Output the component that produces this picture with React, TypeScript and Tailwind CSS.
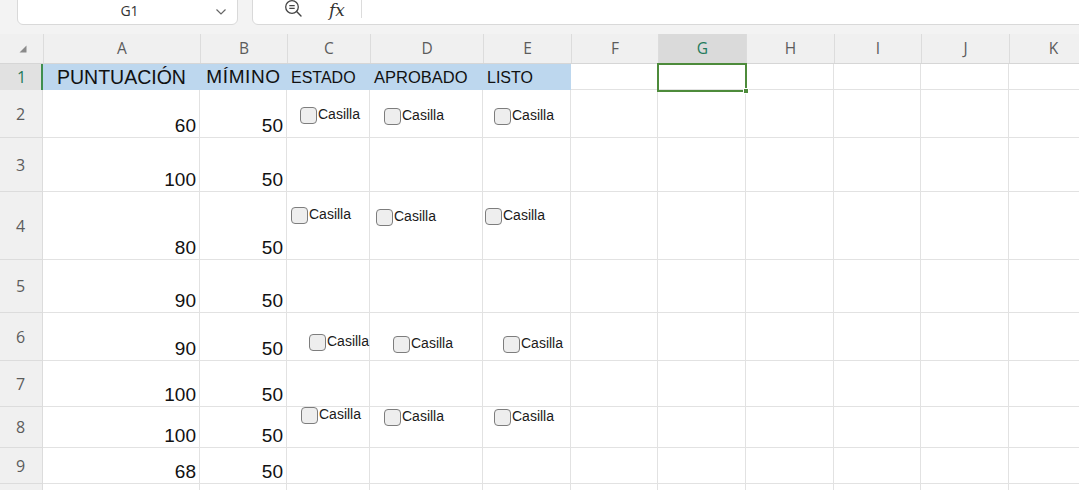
import React from "react";

const colW = [
  "w-[157px]",
  "w-[87px]",
  "w-[83px]",
  "w-[113px]",
  "w-[88px]",
  "w-[87px]",
  "w-[88px]",
  "w-[88px]",
  "w-[87px]",
  "w-[88px]",
  "w-[88px]",
];
const letters = ["A", "B", "C", "D", "E", "F", "G", "H", "I", "J", "K"];

const rowH = [
  "h-[48px]",
  "h-[54px]",
  "h-[68px]",
  "h-[53px]",
  "h-[48px]",
  "h-[46px]",
  "h-[41px]",
  "h-[36px]",
  "h-[20px]",
];
const data: [string, string][] = [
  ["60", "50"],
  ["100", "50"],
  ["80", "50"],
  ["90", "50"],
  ["90", "50"],
  ["100", "50"],
  ["100", "50"],
  ["68", "50"],
  ["", ""],
];

const boxes: { x: number; y: number }[] = [
  { x: 300, y: 107 },
  { x: 384, y: 108 },
  { x: 494, y: 108 },
  { x: 291, y: 207 },
  { x: 376, y: 209 },
  { x: 485, y: 208 },
  { x: 309, y: 334 },
  { x: 393, y: 336 },
  { x: 503, y: 336 },
  { x: 301, y: 407 },
  { x: 384, y: 409 },
  { x: 494, y: 409 },
];

function Casilla({ x, y }: { x: number; y: number }) {
  return (
    <div className="absolute flex items-start" style={{ left: x, top: y }}>
      <div className="w-[17px] h-[17px] rounded-[4px] border border-[#7d7d7d] bg-[#eeeeee]" />
      <span className="text-[14px] leading-[15px] text-[#1a1a1a] ml-[1px]">
        Casilla
      </span>
    </div>
  );
}

export default function App() {
  return (
    <div className="relative w-[1079px] h-[490px] overflow-hidden bg-white font-['Liberation_Sans',Arial,sans-serif]">
      {/* toolbar */}
      <div className="h-[34px] bg-[#f3f3f3] flex items-start">
        <div className="ml-[17px] -mt-[6px] w-[221px] shrink-0 h-[31px] bg-white border border-[#d9d9d9] rounded-[6px] flex items-end pb-[5px] relative">
          <span className="flex-1 text-center text-[14px] leading-[16px] text-[#333] font-['Open_Sans',sans-serif] pl-[4px]">
            G1
          </span>
          <svg className="absolute right-[10px] bottom-[8px]" width="12" height="8" viewBox="0 0 12 8">
            <path d="M1.5 1.5 L6 6 L10.5 1.5" fill="none" stroke="#666" strokeWidth="1.2" />
          </svg>
        </div>
        <div className="ml-[14px] -mt-[6px] flex-1 -mr-[10px] h-[31px] bg-white border border-[#d9d9d9] rounded-[6px] flex items-end pb-[3px]">
          <svg className="ml-[31px] mb-[3px]" width="19" height="19" viewBox="0 0 19 19">
            <circle cx="8" cy="8" r="6.3" fill="none" stroke="#444" strokeWidth="1.3" />
            <path d="M5.3 6.7 H10.7 M5.3 9.3 H10.7" stroke="#444" strokeWidth="1.2" />
            <path d="M12.6 12.6 L17 17" stroke="#444" strokeWidth="1.4" strokeLinecap="round" />
          </svg>
          <span className="ml-[26px] mb-[1px] italic text-[17px] leading-[20px] text-[#333] font-['DejaVu_Serif',serif]">
            fx
          </span>
          <div className="ml-[16px] w-px h-[22px] bg-[#dcdcdc] mb-[3px]" />
        </div>
      </div>

      {/* column header */}
      <div className="flex h-[30px] bg-[#f0f0f0] border-b border-[#d6d6d6]">
        <div className="w-[43px] shrink-0 relative">
          <svg className="absolute left-[19px] top-[11px]" width="8" height="8" viewBox="0 0 8 8">
            <path d="M7.5 0.5 V7.5 H0.5 Z" fill="#8a8a8a" />
          </svg>
        </div>
        {letters.map((l, i) => (
          <div
            key={l}
            className={`${colW[i]} shrink-0 border-l border-[#dcdcdc] flex items-center justify-center pt-[1px] text-[15.5px] font-['Open_Sans',sans-serif] ${
              l === "G" ? "bg-[#dadada] text-[#1f7a5c]" : "text-[#5c5c5c]"
            }`}
          >
            {l}
          </div>
        ))}
      </div>

      {/* row 1 */}
      <div className="flex h-[26px]">
        <div className="w-[43px] shrink-0 bg-[#e1e1e1] border-r-2 border-[#3f8f4e] flex items-center pl-[17px] text-[16px] text-[#1f7a5c] font-['Open_Sans',sans-serif]">
          1
        </div>
        <div className="w-[157px] shrink-0 bg-[#bdd7ee] flex items-center justify-center pt-[1px] text-[19.5px] text-[#111]">
          PUNTUACIÓN
        </div>
        <div className="w-[87px] shrink-0 bg-[#bdd7ee] flex items-center justify-center pt-[1px] text-[19px] text-[#111] whitespace-nowrap tracking-[0.6px]">
          MÍMINO
        </div>
        <div className="w-[83px] shrink-0 bg-[#bdd7ee] flex items-center pl-[4px] pt-[1px] text-[16px] text-[#111] whitespace-nowrap">
          ESTADO
        </div>
        <div className="w-[113px] shrink-0 bg-[#bdd7ee] flex items-center pl-[4px] pt-[1px] text-[16.5px] text-[#111] whitespace-nowrap">
          APROBADO
        </div>
        <div className="w-[88px] shrink-0 bg-[#bdd7ee] flex items-center pl-[4px] pt-[1px] text-[16px] text-[#111] whitespace-nowrap">
          LISTO
        </div>
        {colW.slice(5).map((w, i) => (
          <div key={i} className={`${w} shrink-0 border-r border-b border-[#e2e2e2]`} />
        ))}
      </div>

      {/* rows 2..10 */}
      {rowH.map((h, r) => (
        <div key={r} className={`flex ${h}`}>
          <div className="w-[43px] shrink-0 bg-[#f0f0f0] border-b border-r border-[#dcdcdc] flex items-center pl-[16px] text-[16px] text-[#5c5c5c] font-['Open_Sans',sans-serif]">
            {r < 8 ? r + 2 : ""}
          </div>
          {colW.map((w, c) => (
            <div
              key={c}
              className={`${w} shrink-0 border-r border-b border-[#e2e2e2] flex items-end justify-end pr-[3px] pb-0 text-[19px] leading-[22px] text-[#111]`}
            >
              {c < 2 ? data[r][c] : ""}
            </div>
          ))}
        </div>
      ))}

      {/* selected cell G1 */}
      <div className="absolute left-[657px] top-[63px] w-[90px] h-[29px] border-2 border-[#4d8b3b]" />
      <div className="absolute left-[743px] top-[88px] w-[6px] h-[6px] bg-[#4d8b3b] border border-white" />

      {boxes.map((b, i) => (
        <Casilla key={i} x={b.x} y={b.y} />
      ))}
    </div>
  );
}
